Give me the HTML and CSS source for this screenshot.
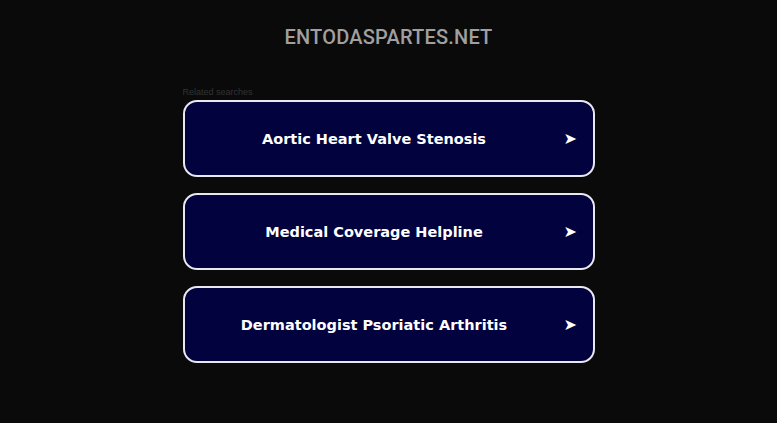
FILE: index.html
```html
<!DOCTYPE html>
<html lang="en">
<head>
    <meta charset="UTF-8">
    <meta name="viewport" content="width=device-width, initial-scale=1.0">
    <title>entodaspartes.net</title>
    <link rel="stylesheet" href="styles.css">
</head>
<body>
    <div class="header">
        <h1 class="domain">entodaspartes.net</h1>
    </div>
    <div class="container">
        <p class="related">Related searches</p>
        <a class="search-link" href="#"><span class="label">Aortic Heart Valve Stenosis</span><span class="arrow">&#10148;</span></a>
        <a class="search-link" href="#"><span class="label">Medical Coverage Helpline</span><span class="arrow">&#10148;</span></a>
        <a class="search-link" href="#"><span class="label">Dermatologist Psoriatic Arthritis</span><span class="arrow">&#10148;</span></a>
    </div>
</body>
</html>
```

FILE: styles.css
```css
body {
    margin: 0;
    background-color: #0a0a0a;
    font-family: "DejaVu Sans", Verdana, sans-serif;
}
.header {
    padding-top: 25px;
    text-align: center;
}
.domain {
    margin: 0;
    font-family: Roboto, "Liberation Sans", Arial, sans-serif;
    font-size: 20px;
    font-weight: 500;
    line-height: 24px;
    letter-spacing: 0.2px;
    text-transform: uppercase;
    color: #a0a0a0;
}
.container {
    width: 412px;
    margin: 0 auto;
    padding-top: 38px;
}
.related {
    margin: 0 0 3px;
    font-family: "Liberation Sans", Arial, sans-serif;
    font-size: 9px;
    line-height: 10px;
    color: #333;
}
.search-link {
    display: flex;
    align-items: center;
    box-sizing: border-box;
    height: 77px;
    margin-bottom: 16px;
    padding: 0 16px 0 0;
    background-color: #02023f;
    border: 2px solid #e8e8f0;
    border-radius: 14px;
    color: #fff;
    text-decoration: none;
}
.label {
    flex: 1;
    text-align: center;
    font-size: 14.5px;
    font-weight: bold;
}
.arrow {
    font-size: 16px;
    width: 13px;
    text-align: center;
}
```
